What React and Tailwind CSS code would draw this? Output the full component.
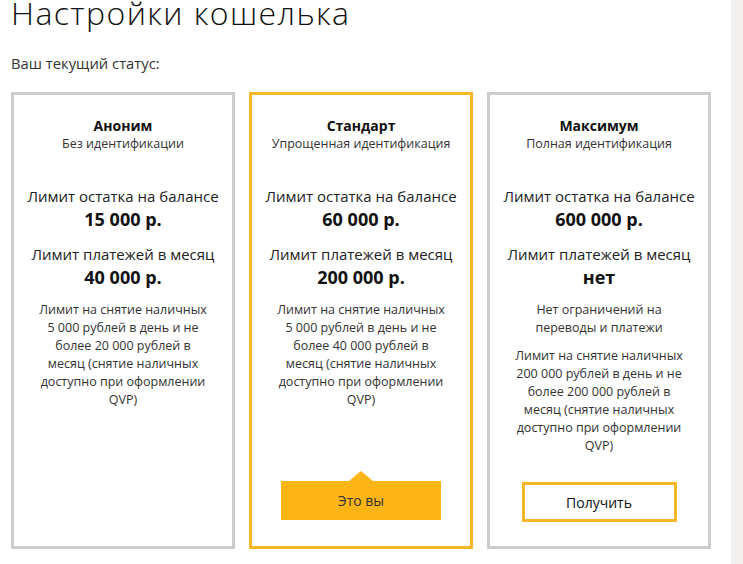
import React from "react";

const font = { fontFamily: '"Open Sans", "Liberation Sans", sans-serif' };

function Card({ title, subtitle, balance, payments, notes, active, button }) {
  return (
    <div
      className={
        "flex flex-col items-center text-center h-[457px] border-[3px] " +
        (active ? "border-[#f6b626]" : "border-[#cccccc]")
      }
    >
      <div className="mt-[21px] text-[14px] leading-[20px] font-bold text-[#111]">{title}</div>
      <div className="text-[12.5px] leading-[16px] text-[#333]">{subtitle}</div>
      <div className="mt-[34px] text-[15px] leading-[20px] text-[#222]">Лимит остатка на балансе</div>
      <div className="mt-[1px] text-[18px] leading-[24px] font-bold text-[#111]">{balance}</div>
      <div className="mt-[13px] text-[15px] leading-[20px] text-[#222]">Лимит платежей в месяц</div>
      <div className="mt-[1px] text-[18px] leading-[24px] font-bold text-[#111]">{payments}</div>
      <div className="mt-[12px] px-[23px] flex flex-col gap-[10px]">
        {notes.map((n, i) => (
          <p key={i} className="text-[12.5px] leading-[18px] text-[#333]">{n}</p>
        ))}
      </div>
      {button}
    </div>
  );
}

export default function App() {
  return (
    <div className="flex w-[743px] h-[564px] overflow-hidden bg-white" style={font}>
      <div className="w-[731px] shrink-0">
        <h1 className="mt-[-7px] ml-[11px] text-[32px] leading-[40px] tracking-[1.4px] text-[#111] font-light">
          Настройки кошелька
        </h1>
        <div className="mt-[20px] ml-[11px] text-[14.8px] leading-[20px] text-[#333]">Ваш текущий статус:</div>
        <div className="mt-[19px] ml-[11px] w-[700px] grid grid-cols-3 gap-[14px]">
          <Card
            title="Аноним"
            subtitle="Без идентификации"
            balance="15 000 р."
            payments="40 000 р."
            notes={[
              "Лимит на снятие наличных 5 000 рублей в день и не более 20 000 рублей в месяц (снятие наличных доступно при оформлении QVP)",
            ]}
          />
          <Card
            active
            title="Стандарт"
            subtitle="Упрощенная идентификация"
            balance="60 000 р."
            payments="200 000 р."
            notes={[
              "Лимит на снятие наличных 5 000 рублей в день и не более 40 000 рублей в месяц (снятие наличных доступно при оформлении QVP)",
            ]}
            button={
              <div className="mt-auto mb-[26px] relative w-[160px] h-[39px] bg-[#fcb514] flex items-center justify-center text-[14px] text-[#333]">
                <span className="absolute left-1/2 -translate-x-1/2 top-[-10px] w-0 h-0 border-l-[12px] border-r-[12px] border-b-[10px] border-l-transparent border-r-transparent border-b-[#fcb514]" />
                Это вы
              </div>
            }
          />
          <Card
            title="Максимум"
            subtitle="Полная идентификация"
            balance="600 000 р."
            payments="нет"
            notes={[
              "Нет ограничений на переводы и платежи",
              "Лимит на снятие наличных 200 000 рублей в день и не более 200 000 рублей в месяц (снятие наличных доступно при оформлении QVP)",
            ]}
            button={
              <button className="mt-auto mb-[24px] w-[155px] h-[40px] border-[3px] border-[#f6b626] bg-white flex items-center justify-center text-[14px] text-[#111]">
                Получить
              </button>
            }
          />
        </div>
      </div>
      <div className="flex-1 bg-[#f2f1f0]" />
    </div>
  );
}
